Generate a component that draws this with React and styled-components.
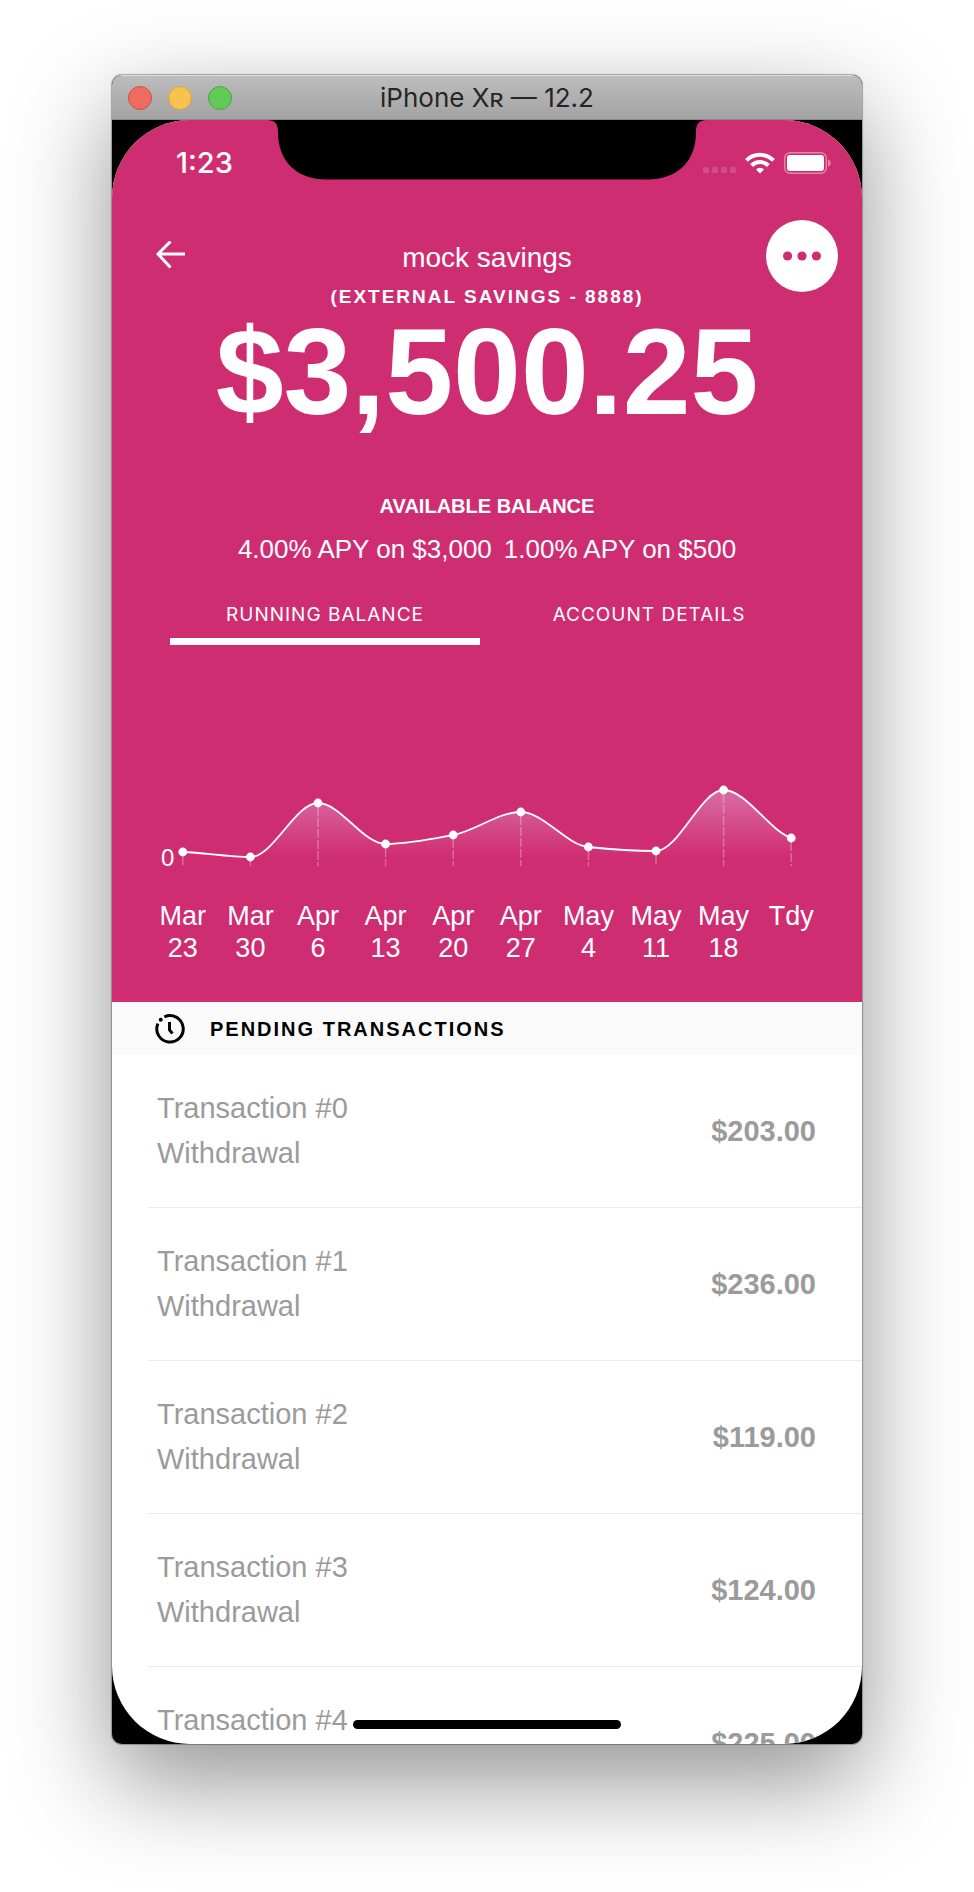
import React from "react";
import styled, { createGlobalStyle } from "styled-components";

const PINK = "#cf2d71";
const SANS = '"Liberation Sans", Arial, sans-serif';
const UI = 'Inter, "Liberation Sans", sans-serif';

const GlobalStyle = createGlobalStyle`
  *, *::before, *::after { box-sizing: border-box; }
  html, body { margin: 0; background: #fff; }
  button { font: inherit; color: inherit; background: none; border: 0; padding: 0; cursor: pointer; }
  h1, h2, p, ul { margin: 0; padding: 0; font: inherit; list-style: none; }
`;

const Page = styled.main`
  display: flex;
  height: 100vh;
  padding: 75px 112px 148px;
  font-family: ${SANS};
`;

const Window = styled.section`
  flex: 1;
  min-width: 0;
  display: flex;
  flex-direction: column;
  border-radius: 10px;
  background: #000;
  overflow: hidden;
  box-shadow: 0 0 1px 1px rgba(0, 0, 0, 0.3), 0 36px 100px rgba(0, 0, 0, 0.44);
`;

const TitleBar = styled.header`
  display: grid;
  grid-template-columns: 1fr auto 1fr;
  align-items: center;
  height: 45px;
  flex: none;
  padding: 0 16px;
  background: linear-gradient(#bdbdbd, #a3a3a3);
  border-top: 1px solid #dcdcdc;
  border-bottom: 1px solid #8a8a8a;
`;

const Lights = styled.div`
  display: flex;
  gap: 16px;
`;

const Light = styled.button`
  width: 24px;
  height: 24px;
  border-radius: 50%;
  background: ${(p) => p.$fill};
  border: 1px solid ${(p) => p.$edge};
`;

const WindowTitle = styled.h1`
  font-family: ${UI};
  font-size: 26px;
  line-height: 32px;
  color: #262626;
`;

const Screen = styled.div`
  position: relative;
  flex: 1;
  min-height: 0;
  overflow: hidden;
  border-radius: 78px;
  background: #fff;
`;

const Notch = styled.svg`
  position: absolute;
  top: 0;
  left: 50%;
  width: 440px;
  height: 60px;
  transform: translateX(-50%);
`;

const HomeIndicator = styled.div`
  position: absolute;
  left: 50%;
  bottom: 15px;
  width: 268px;
  height: 9px;
  border-radius: 5px;
  background: #000;
  transform: translateX(-50%);
`;

const Hero = styled.section`
  background: ${PINK};
  color: #fff;
  padding-bottom: 38px;
  text-align: center;
`;

const StatusBar = styled.div`
  display: flex;
  align-items: center;
  justify-content: space-between;
  height: 86px;
  padding: 0 30px 0 64px;
`;

const Clock = styled.time`
  font-family: ${UI};
  font-size: 29px;
  font-weight: 500;
  line-height: 32px;
`;

const StatusIcons = styled.div`
  display: flex;
  align-items: center;
  gap: 9px;
`;

const Nav = styled.nav`
  display: grid;
  grid-template-columns: 72px 1fr 72px;
  padding: 14px 24px 0;
`;

const NavButton = styled.button`
  display: grid;
  place-items: center;
  width: 72px;
  height: 72px;
  border-radius: 50%;
  background: ${(p) => (p.$solid ? "#fff" : "transparent")};
`;

const Heading = styled.div`
  padding-top: 22px;
`;

const AccountName = styled.h2`
  font-size: 28px;
  line-height: 32px;
`;

const AccountNumber = styled.p`
  margin-top: 11px;
  font-size: 19px;
  font-weight: 700;
  line-height: 24px;
  letter-spacing: 2px;
`;

const Balance = styled.p`
  margin-top: 11px;
  font-size: 122px;
  font-weight: 700;
  line-height: 104px;
`;

const BalanceCaption = styled.p`
  margin-top: 70px;
  font-size: 20px;
  font-weight: 700;
  line-height: 24px;
`;

const Rates = styled.p`
  display: flex;
  justify-content: center;
  gap: 12px;
  margin-top: 15px;
  font-size: 26px;
  line-height: 32px;
`;

const Tabs = styled.div`
  display: grid;
  grid-template-columns: 1fr 1fr;
  margin-top: 38px;
  padding: 0 51px;
`;

const Tab = styled.button`
  margin: 0 7px;
  padding-bottom: 11px;
  border-bottom: 7px solid ${(p) => (p.$active ? "#fff" : "transparent")};
  font-family: ${UI};
  font-size: 19px;
  line-height: 24px;
  letter-spacing: 1px;
`;

const ChartBlock = styled.div`
  margin-top: 115px;
  padding: 0 37px;
`;

const ChartSvg = styled.svg`
  display: block;
  width: 100%;
  overflow: visible;
`;

const Dates = styled.div`
  display: grid;
  grid-template-columns: repeat(10, 1fr);
  margin-top: 28px;
  font-size: 27px;
  line-height: 32px;
`;

const DateLabel = styled.div`
  display: flex;
  flex-direction: column;
  align-items: center;
`;

const SectionHeader = styled.header`
  display: flex;
  align-items: center;
  gap: 25px;
  height: 53px;
  padding: 0 43px;
  background: #fafafa;
`;

const SectionTitle = styled.h2`
  font-size: 20px;
  font-weight: 700;
  line-height: 24px;
  letter-spacing: 2px;
`;

const Row = styled.li`
  display: flex;
  align-items: center;
  justify-content: space-between;
  height: 153px;
  margin-left: 36px;
  padding: 0 46px 0 9px;
  border-bottom: 1px solid #ebebeb;
  color: #9b9b9b;
  font-size: 29px;
  line-height: 45px;
`;

const Amount = styled.strong`
  font-weight: 700;
`;

const points = [
  ["Mar", "23", 92], ["Mar", "30", 97], ["Apr", "6", 43], ["Apr", "13", 84], ["Apr", "20", 75],
  ["Apr", "27", 52], ["May", "4", 87], ["May", "11", 91], ["May", "18", 30], ["Tdy", "", 78],
].map(([month, day, y], i) => ({ month, day, x: 33.8 + i * 67.6, y }));

// Monotone cubic interpolation, so the curve never overshoots a point.
function curvePath(pts) {
  const n = pts.length;
  const slope = pts.slice(1).map((p, i) => (p.y - pts[i].y) / (p.x - pts[i].x));
  const tangent = pts.map((_, i) => {
    if (i === 0) return slope[0] / 2;
    if (i === n - 1) return slope[n - 2] / 2;
    const a = slope[i - 1];
    const b = slope[i];
    return a * b <= 0 ? 0 : (2 * a * b) / (a + b);
  });
  let d = `M${pts[0].x} ${pts[0].y}`;
  for (let i = 1; i < n; i++) {
    const h = (pts[i].x - pts[i - 1].x) / 3;
    d += `C${pts[i - 1].x + h} ${pts[i - 1].y + tangent[i - 1] * h} ${pts[i].x - h} ${pts[i].y - tangent[i] * h} ${pts[i].x} ${pts[i].y}`;
  }
  return d;
}

const line = curvePath(points);

function BalanceChart() {
  return (
    <ChartSvg viewBox="0 0 676 112" role="img" aria-label="Running balance">
      <defs>
        <linearGradient id="fill" gradientUnits="userSpaceOnUse" x1="0" y1="30" x2="0" y2="97">
          <stop offset="0" stopColor="#e8c5ee" stopOpacity="0.42" />
          <stop offset="1" stopColor="#e8c5ee" stopOpacity="0" />
        </linearGradient>
      </defs>
      <path d={`${line}V97H${points[0].x}Z`} fill="url(#fill)" />
      {points.map((p) => (
        <path key={p.x} d={`M${p.x} ${p.y + 4}V106`} stroke="#fff" strokeOpacity="0.27" strokeWidth="1.6" strokeDasharray="9 2" />
      ))}
      <path d={line} fill="none" stroke="#fff" strokeWidth="1.8" />
      {points.map((p) => (
        <circle key={p.x} cx={p.x} cy={p.y} r="4.4" fill="#fff" />
      ))}
      <text x="12" y="106" fontSize="24" fill="#fff">0</text>
    </ChartSvg>
  );
}

const transactions = ["$203.00", "$236.00", "$119.00", "$124.00", "$225.00"];

export default function App() {
  return (
    <Page>
      <GlobalStyle />
      <Window>
        <TitleBar>
          <Lights>
            <Light $fill="#ed6b60" $edge="#d35047" aria-label="Close" />
            <Light $fill="#f6c351" $edge="#d9a33c" aria-label="Minimize" />
            <Light $fill="#62cb58" $edge="#4aa73e" aria-label="Zoom" />
          </Lights>
          <WindowTitle>iPhone Xʀ — 12.2</WindowTitle>
        </TitleBar>
        <Screen>
          <Hero>
            <StatusBar>
              <Clock>1:23</Clock>
              <StatusIcons>
                <svg width="33" height="22" viewBox="0 0 33 22" fill="#fff" fillOpacity="0.15">
                  {[0, 9, 18, 27].map((x) => (
                    <rect key={x} x={x} y="15" width="6" height="6" rx="1.5" />
                  ))}
                </svg>
                <svg width="30" height="22" viewBox="0 0 30 22" fill="none" stroke="#fff" strokeWidth="4">
                  <path d="M1.5 8.4a19.1 19.1 0 0 1 27 0" />
                  <path d="M6.6 13.5a11.9 11.9 0 0 1 16.8 0" />
                  <path d="M15 21.5l-4-4a5.7 5.7 0 0 1 8 0z" fill="#fff" stroke="none" />
                </svg>
                <svg width="48" height="22" viewBox="0 0 48 22">
                  <rect x="0.7" y="0.7" width="41.6" height="20.6" rx="5.5" fill="none" stroke="#fff" strokeOpacity="0.42" strokeWidth="1.4" />
                  <rect x="3" y="3" width="37" height="16" rx="3" fill="#fff" />
                  <path d="M44 7.5c3.6 1 3.6 6 0 7z" fill="#fff" fillOpacity="0.42" />
                </svg>
              </StatusIcons>
            </StatusBar>
            <Nav>
              <NavButton aria-label="Back">
                <svg width="32" height="30" viewBox="0 0 32 30" fill="none" stroke="#fff" strokeWidth="3">
                  <path d="M29 13H2M14.5 0.5L2 13l12.5 13.5" />
                </svg>
              </NavButton>
              <Heading>
                <AccountName>mock savings</AccountName>
                <AccountNumber>(EXTERNAL SAVINGS - 8888)</AccountNumber>
              </Heading>
              <NavButton $solid aria-label="More">
                <svg width="38" height="10" viewBox="0 0 38 10" fill={PINK}>
                  <circle cx="4.6" cy="5" r="4.6" />
                  <circle cx="19" cy="5" r="4.6" />
                  <circle cx="33.4" cy="5" r="4.6" />
                </svg>
              </NavButton>
            </Nav>
            <Balance>$3,500.25</Balance>
            <BalanceCaption>AVAILABLE BALANCE</BalanceCaption>
            <Rates>
              <span>4.00% APY on $3,000</span>
              <span>1.00% APY on $500</span>
            </Rates>
            <Tabs role="tablist">
              <Tab role="tab" aria-selected="true" $active>RUNNING BALANCE</Tab>
              <Tab role="tab" aria-selected="false">ACCOUNT DETAILS</Tab>
            </Tabs>
            <ChartBlock>
              <BalanceChart />
              <Dates>
                {points.map((p) => (
                  <DateLabel key={p.x}>
                    <span>{p.month}</span>
                    <span>{p.day}</span>
                  </DateLabel>
                ))}
              </Dates>
            </ChartBlock>
          </Hero>
          <section>
            <SectionHeader>
              <svg width="30" height="30" viewBox="0 0 30 30" fill="none" stroke="#000" strokeWidth="3">
                <path d="M9.4 2.9A13.2 13.2 0 1 1 2.9 9.6" />
                <path d="M14.5 8v8l3 3.4" />
                <circle cx="5.7" cy="5.7" r="2" fill="#000" stroke="none" />
              </svg>
              <SectionTitle>PENDING TRANSACTIONS</SectionTitle>
            </SectionHeader>
            <ul>
              {transactions.map((amount, i) => (
                <Row key={i}>
                  <div>
                    <p>Transaction #{i}</p>
                    <p>Withdrawal</p>
                  </div>
                  <Amount>{amount}</Amount>
                </Row>
              ))}
            </ul>
          </section>
          <Notch viewBox="0 0 440 60">
            <path d="M0 0C9 0 11 5 11 12C11 42 30 59.5 60 59.5H380C410 59.5 429 42 429 12C429 5 431 0 440 0Z" />
          </Notch>
          <HomeIndicator />
        </Screen>
      </Window>
    </Page>
  );
}
